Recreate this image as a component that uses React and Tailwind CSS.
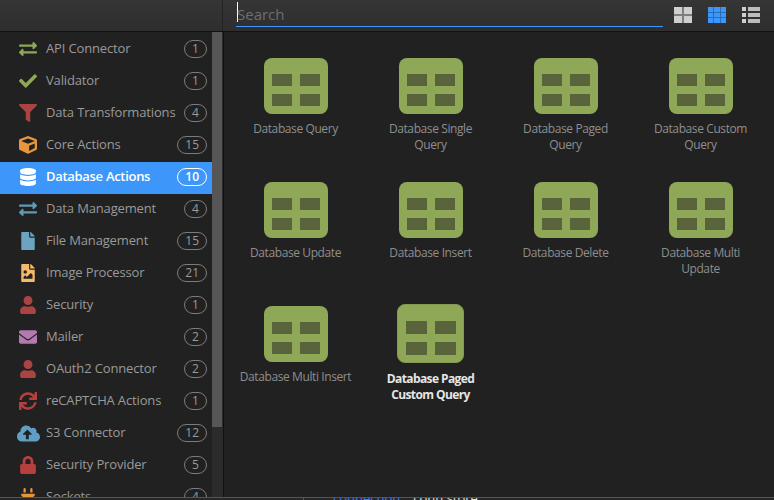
import React from "react";
import {
  FaExchangeAlt,
  FaCheck,
  FaFilter,
  FaCube,
  FaDatabase,
  FaFile,
  FaFileImage,
  FaUser,
  FaEnvelope,
  FaSync,
  FaCloudUploadAlt,
  FaLock,
  FaPlug,
} from "react-icons/fa";

const categories = [
  { name: "API Connector", count: 1, Icon: FaExchangeAlt, color: "text-[#8fa858]" },
  { name: "Validator", count: 1, Icon: FaCheck, color: "text-[#8fa858]" },
  { name: "Data Transformations", count: 4, Icon: FaFilter, color: "text-[#a94442]" },
  { name: "Core Actions", count: 15, Icon: FaCube, color: "text-[#e8963e]" },
  { name: "Database Actions", count: 10, Icon: FaDatabase, color: "text-white", active: true },
  { name: "Data Management", count: 4, Icon: FaExchangeAlt, color: "text-[#5f9ab8]" },
  { name: "File Management", count: 15, Icon: FaFile, color: "text-[#6ba3c0]" },
  { name: "Image Processor", count: 21, Icon: FaFileImage, color: "text-[#f5b96b]" },
  { name: "Security", count: 1, Icon: FaUser, color: "text-[#a94442]" },
  { name: "Mailer", count: 2, Icon: FaEnvelope, color: "text-[#b27ab0]" },
  { name: "OAuth2 Connector", count: 2, Icon: FaUser, color: "text-[#a94442]" },
  { name: "reCAPTCHA Actions", count: 1, Icon: FaSync, color: "text-[#b5403e]" },
  { name: "S3 Connector", count: 12, Icon: FaCloudUploadAlt, color: "text-[#5f9fc4]", large: true },
  { name: "Security Provider", count: 5, Icon: FaLock, color: "text-[#b5403e]" },
  { name: "Sockets", count: 4, Icon: FaPlug, color: "text-[#e8963e]" },
];

const actions = [
  "Database Query",
  "Database Single Query",
  "Database Paged Query",
  "Database Custom Query",
  "Database Update",
  "Database Insert",
  "Database Delete",
  "Database Multi Update",
  "Database Multi Insert",
  "Database Paged Custom Query",
];

// Green table tile used by every action
const TableTile = ({ hovered }) => (
  <div
    className={
      hovered
        ? "w-[67px] h-[59px] -mt-[2px] rounded-lg bg-[#8fa858] border border-[#83994f] grid grid-cols-2 gap-[8px] pl-[8px] pr-[7px] pt-[16px] pb-[7px]"
        : "w-16 h-14 rounded-lg bg-[#8fa858] grid grid-cols-2 gap-[8px] px-[8px] pt-[16px] pb-[8px]"
    }
  >
    <div className="bg-[#59633c]" />
    <div className="bg-[#59633c]" />
    <div className="bg-[#59633c]" />
    <div className="bg-[#59633c]" />
  </div>
);

const SidebarRow = ({ name, count, Icon, color, active, large }) => (
  <div className={`flex items-center h-8 shrink-0 pb-[2px] ${active ? "bg-[#3d97fb]" : ""}`}>
    <div className="w-[46px] flex justify-center pl-[10px] shrink-0">
      <Icon className={`${large ? "w-[23px] h-[23px]" : "w-[18px] h-[18px]"} ${color}`} />
    </div>
    <span
      className={`flex-1 text-[13px] whitespace-nowrap ${
        active ? "text-white font-semibold tracking-[-0.3px]" : "text-[#9a9a9a] tracking-[-0.15px]"
      }`}
    >
      {name}
    </span>
    <span
      className={`mr-[5px] h-[18px] min-w-[23px] px-[7px] rounded-full border flex items-center justify-center text-[12px] leading-none ${
        active ? "border-white text-white font-semibold" : "border-[#7c7c7c] text-[#9a9a9a]"
      }`}
    >
      {count}
    </span>
  </div>
);

const ActionItem = ({ label, hovered }) => (
  <div className="w-[135px] h-[124px] flex flex-col items-center">
    <TableTile hovered={hovered} />
    <p
      className={`w-[116px] text-center text-[12px] leading-4 ${
        hovered ? "mt-[8px] text-[#e6e6e6] font-bold tracking-[-0.6px]" : "mt-[7px] text-[#8e8e8e] tracking-[-0.4px]"
      }`}
    >
      {label}
    </p>
  </div>
);

export default function App() {
  return (
    <div className="w-[774px] h-[500px] overflow-hidden flex flex-col bg-[#212121] font-['Open_Sans',sans-serif]">
      {/* top bar */}
      <header className="h-8 shrink-0 flex bg-gradient-to-b from-[#353535] to-[#2e2e2e] border-b border-[#111111]">
        <div className="w-[223px] border-r border-[#222222]" />
        <div className="flex-1 flex items-start pl-[13px]">
          <div className="w-[427px] h-[27px] border-b border-[#3d97fb] flex items-center pl-[1px]">
            <span className="w-px h-[20px] bg-white -mt-[2px]" />
            <span className="text-[15px] text-[#6e6e6e] leading-none -ml-px mt-[2px]">Search</span>
          </div>
          <div className="flex items-center gap-[16px] ml-[11px] mt-[7px]">
            <div className="w-[18px] h-4 grid grid-cols-2 gap-[2px] bg-[#7e7e7e]">
              <div className="bg-[#cfcfcf]" />
              <div className="bg-[#cfcfcf]" />
              <div className="bg-[#cfcfcf]" />
              <div className="bg-[#cfcfcf]" />
            </div>
            <div className="w-[18px] h-4 grid grid-cols-3 gap-px bg-[#2a6cb5]">
              {Array.from({ length: 9 }).map((_, i) => (
                <div key={i} className="bg-[#3d97fb]" />
              ))}
            </div>
            <div className="w-[18px] h-4 flex flex-col justify-between">
              {[0, 1, 2].map((i) => (
                <div key={i} className="flex gap-[2px] h-[4px]">
                  <div className="w-[4px] bg-[#cfcfcf]" />
                  <div className="flex-1 bg-[#bdbdbd]" />
                </div>
              ))}
            </div>
          </div>
        </div>
      </header>

      <div className="flex h-[465px] shrink-0">
        {/* sidebar */}
        <aside className="w-[212px] shrink-0 flex flex-col overflow-hidden pt-[2px]">
          {categories.map((c) => (
            <SidebarRow key={c.name} {...c} />
          ))}
        </aside>
        {/* scrollbar */}
        <div className="w-[11px] shrink-0 bg-[#2b2b2b]">
          <div className="h-[395px] bg-[#565656] mr-px" />
        </div>
        {/* action grid */}
        <main className="flex-1 border-l border-[#111111] pl-[4px] pt-[26px]">
          <div className="flex flex-wrap">
            {actions.map((a, i) => (
              <ActionItem key={a} label={a} hovered={i === actions.length - 1} />
            ))}
          </div>
        </main>
      </div>

      {/* editor peeking out below the panel */}
      <footer className="h-[3px] shrink-0 border-t border-[#555555] bg-[#262626] overflow-hidden pl-[303px] flex text-[13px] leading-[6px]">
        <span className="w-px h-full bg-[#555555] mr-[29px]" />
        <span className="text-[#3d7bfb] -mt-[3px] mr-[13px]">connection</span>
        <span className="text-[#e0e0e0] -mt-[3px]">conn.store</span>
      </footer>
    </div>
  );
}
